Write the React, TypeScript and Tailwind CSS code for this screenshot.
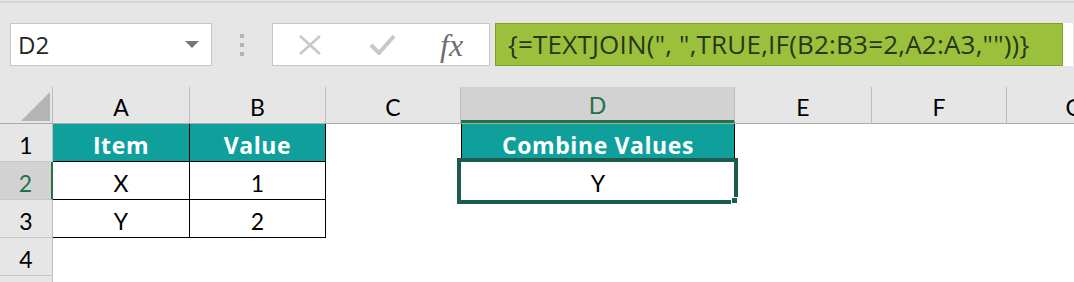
import React from 'react';

const cols = [
    { name: 'A', w: 'w-[137px]' },
    { name: 'B', w: 'w-[136px]' },
    { name: 'C', w: 'w-[135px]' },
    { name: 'D', w: 'w-[274px]' },
    { name: 'E', w: 'w-[137px]' },
    { name: 'F', w: 'w-[135px]' },
    { name: 'G', w: 'w-[135px]' },
];

const font = { fontFamily: 'Lato, "Open Sans", sans-serif' };
const wide = { fontFamily: '"Open Sans", Lato, sans-serif' };

function Toolbar() {
    return (
        <div className="h-[87px] bg-[#e6e6e6] flex flex-col">
            <div className="h-[1px] bg-[#e6e6e6]" />
            <div className="h-[2px] bg-[#d4d4d4]" />
            <div className="flex items-start pt-[20px]">
                {/* name box */}
                <div className="ml-[10px] w-[202px] h-[43px] bg-white border border-[#c6c6c6] flex items-center justify-between pl-[7px] pr-[12px]">
                    <span className="text-[24px] text-[#262626]" style={wide}>D2</span>
                    <svg width="14" height="7" viewBox="0 0 14 7">
                        <path d="M0 0 L14 0 L7 7 Z" fill="#767676" />
                    </svg>
                </div>
                <div className="w-[60px] h-[43px] flex flex-col items-center justify-center gap-[5px]">
                    <div className="w-[4px] h-[4px] bg-[#b3b3b3]" />
                    <div className="w-[4px] h-[4px] bg-[#b3b3b3]" />
                    <div className="w-[4px] h-[4px] bg-[#b3b3b3]" />
                </div>
                {/* cancel / enter / fx */}
                <div className="w-[218px] h-[43px] bg-white border border-[#c6c6c6] flex items-center">
                    <svg className="ml-[25px]" width="24" height="20" viewBox="0 0 24 20">
                        <path d="M2 1 L22 19 M22 1 L2 19" stroke="#c8c8c8" strokeWidth="2.6" fill="none" />
                    </svg>
                    <svg className="ml-[47px]" width="27" height="21" viewBox="0 0 27 21">
                        <path d="M2 11 L10 19 L25 2" stroke="#c8c8c8" strokeWidth="4" fill="none" />
                    </svg>
                    <span className="ml-[44px] text-[32px] italic text-[#6e6e6e] leading-none" style={{ fontFamily: '"Liberation Serif", serif' }}>
                        fx
                    </span>
                </div>
                {/* formula */}
                <div className="ml-[5px] w-[568px] h-[43px] bg-[#9bc13c] border border-[#7da22c] flex items-center pl-[12px]">
                    <span className="text-[26px] tracking-[0.2px] text-[#2a3518] whitespace-pre" style={wide}>
                        {'{=TEXTJOIN(", ",TRUE,IF(B2:B3=2,A2:A3,""))}'}
                    </span>
                </div>
                <div className="w-[10px] h-[43px] bg-white" />
            </div>
        </div>
    );
}

function ColumnHeader() {
    return (
        <div className="flex h-[37px] bg-[#e6e6e6] border-b border-[#ababab]">
            <div className="w-[53px] shrink-0 border-r border-[#bdbdbd] relative">
                <svg className="absolute left-[21px] top-[5px]" width="29" height="29" viewBox="0 0 29 29">
                    <path d="M29 0 L29 29 L0 29 Z" fill="#b4b4b4" />
                </svg>
            </div>
            {cols.map((c) => {
                const sel = c.name === 'D';
                return (
                    <div
                        key={c.name}
                        className={`${c.w} shrink-0 flex items-center justify-center text-[23px] border-r border-[#bdbdbd] pt-[4px] ${
                            sel ? 'bg-[#d2d2d2] text-[#217346] border-b-[3px] border-b-[#217346]' : 'text-black'
                        }`}
                        style={font}
                    >
                        {c.name}
                    </div>
                );
            })}
        </div>
    );
}

function RowHead({ n, sel }: { n?: number; sel?: boolean }) {
    return (
        <div
            className={`w-[53px] shrink-0 h-full flex items-center justify-center text-[23px] pt-[5px] border-b border-[#c8c8c8] ${
                sel ? 'bg-[#d2d2d2] text-[#217346] border-r-[2px] border-r-[#217346]' : 'bg-[#e6e6e6] text-black border-r border-r-[#bdbdbd]'
            }`}
            style={font}
        >
            {n}
        </div>
    );
}

function Cell({ w, children, cls = '', bold }: { w: string; children?: React.ReactNode; cls?: string; bold?: boolean }) {
    return (
        <div
            className={`${w} shrink-0 h-full flex items-center justify-center pt-[5px] ${
                bold ? 'text-[23px] font-bold text-white bg-[#0fa09c] tracking-[0.6px]' : 'text-[23px]'
            } ${cls}`}
            style={bold ? wide : font}
        >
            {children}
        </div>
    );
}

export default function App() {
    return (
        <div className="w-[1074px] h-[282px] overflow-hidden bg-white">
            <Toolbar />
            <ColumnHeader />
            {/* row 1 */}
            <div className="flex h-[38px]">
                <RowHead n={1} />
                <Cell w="w-[137px]" bold cls="border-r border-b border-black">Item</Cell>
                <Cell w="w-[136px]" bold cls="border-r border-b border-black">Value</Cell>
                <Cell w="w-[135px]" />
                <Cell w="w-[274px]" bold cls="border-l border-r border-black">Combine Values</Cell>
            </div>
            {/* row 2 */}
            <div className="flex h-[38px] relative">
                <RowHead n={2} sel />
                <Cell w="w-[137px]" cls="border-r border-b border-black">X</Cell>
                <Cell w="w-[136px]" cls="border-r border-b border-black">1</Cell>
                <Cell w="w-[135px]" />
                <Cell w="w-[274px]">Y</Cell>
                {/* selection */}
                <div className="absolute left-[457px] top-[-4px] w-[281px] h-[46px] border-[4px] border-[#1c5b4f]" />
                <div className="absolute left-[731px] top-[35px] w-[7px] h-[7px] bg-[#1c5b4f] border border-white" />
            </div>
            {/* row 3 */}
            <div className="flex h-[38px]">
                <RowHead n={3} />
                <Cell w="w-[137px]" cls="border-r border-b border-black">Y</Cell>
                <Cell w="w-[136px]" cls="border-r border-b border-black">2</Cell>
            </div>
            {/* row 4 */}
            <div className="flex h-[38px]">
                <RowHead n={4} />
            </div>
            <div className="flex h-[10px]">
                <RowHead />
            </div>
        </div>
    );
}
